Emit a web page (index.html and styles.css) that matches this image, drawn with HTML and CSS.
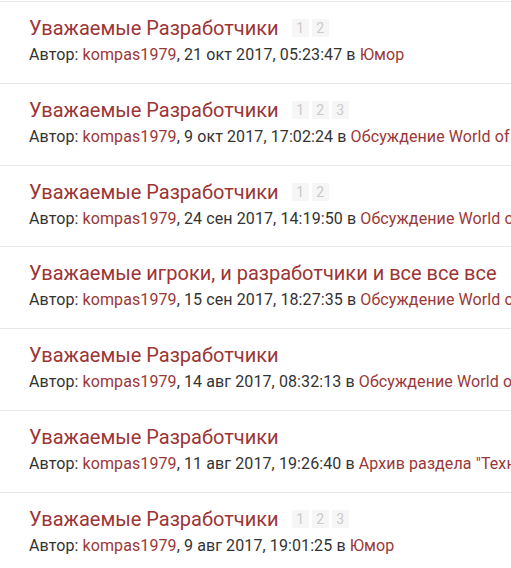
FILE: index.html
```html
<!DOCTYPE html>
<html lang="ru">

<head>
    <meta charset="UTF-8">
    <meta name="viewport" content="width=device-width, initial-scale=1.0">
    <title>Темы пользователя</title>
    <link rel="stylesheet" href="styles.css">
</head>

<body>
    <div class="topics">
        <div class="topic">
            <div class="title"><a href="#">Уважаемые Разработчики</a>
                <span class="pages"><span>1</span><span>2</span></span>
            </div>
            <div class="meta">Автор: <a href="#">kompas1979</a>, 21 окт 2017, 05:23:47 в <a href="#">Юмор</a></div>
        </div>
        <div class="topic">
            <div class="title"><a href="#">Уважаемые Разработчики</a>
                <span class="pages"><span>1</span><span>2</span><span>3</span></span>
            </div>
            <div class="meta">Автор: <a href="#">kompas1979</a>, 9 окт 2017, 17:02:24 в <a href="#">Обсуждение World of Tanks</a></div>
        </div>
        <div class="topic">
            <div class="title"><a href="#">Уважаемые Разработчики</a>
                <span class="pages"><span>1</span><span>2</span></span>
            </div>
            <div class="meta">Автор: <a href="#">kompas1979</a>, 24 сен 2017, 14:19:50 в <a href="#">Обсуждение World of Tanks</a></div>
        </div>
        <div class="topic">
            <div class="title"><a href="#">Уважаемые игроки, и разработчики и все все все</a></div>
            <div class="meta">Автор: <a href="#">kompas1979</a>, 15 сен 2017, 18:27:35 в <a href="#">Обсуждение World of Tanks</a></div>
        </div>
        <div class="topic">
            <div class="title"><a href="#">Уважаемые Разработчики</a></div>
            <div class="meta">Автор: <a href="#">kompas1979</a>, 14 авг 2017, 08:32:13 в <a href="#">Обсуждение World of Tanks</a></div>
        </div>
        <div class="topic">
            <div class="title"><a href="#">Уважаемые Разработчики</a></div>
            <div class="meta">Автор: <a href="#">kompas1979</a>, 11 авг 2017, 19:26:40 в <a href="#">Архив раздела "Техническая поддержка"</a></div>
        </div>
        <div class="topic">
            <div class="title"><a href="#">Уважаемые Разработчики</a>
                <span class="pages"><span>1</span><span>2</span><span>3</span></span>
            </div>
            <div class="meta">Автор: <a href="#">kompas1979</a>, 9 авг 2017, 19:01:25 в <a href="#">Юмор</a></div>
        </div>
    </div>
</body>

</html>
```

FILE: styles.css
```css
* {
    margin: 0;
    padding: 0;
}

body {
    background: #fff;
    font-family: Roboto, "Noto Sans", sans-serif;
    overflow: hidden;
}

a {
    color: #9a3838;
    text-decoration: none;
}

.topics {
    padding-top: 1px;
    width: 700px;
}

.topic {
    border-top: 1px solid #e8e8e8;
    padding: 14px 0 17.75px 29px;
    white-space: nowrap;
}

.title {
    display: flex;
    align-items: center;
    height: 24px;
    font-size: 20px;
    line-height: 24px;
}

.title a {
    color: #9c3535;
}

.pages {
    display: flex;
    gap: 3px;
    margin-left: 13px;
}

.pages span {
    display: block;
    width: 17px;
    height: 18px;
    background: #f6f6f6;
    color: #cacaca;
    font-size: 14px;
    line-height: 18px;
    text-align: center;
}

.meta {
    margin-top: 5px;
    font-size: 16px;
    line-height: 20px;
    letter-spacing: 0.1px;
    color: #333;
}
```
